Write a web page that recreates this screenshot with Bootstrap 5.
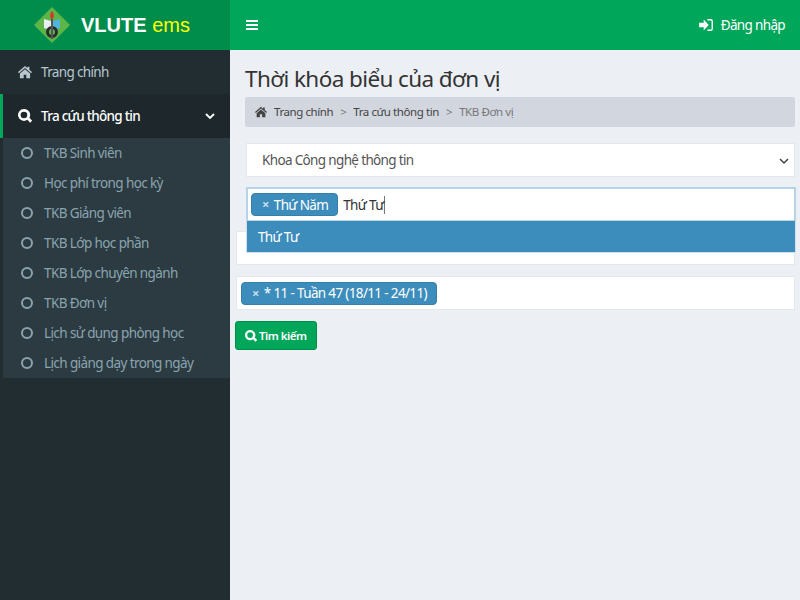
<!DOCTYPE html>
<html lang="en">

<head>
    <meta charset="UTF-8">
    <meta name="viewport" content="width=device-width, initial-scale=1.0">
    <title>Thời khóa biểu của đơn vị</title>
    <link href="https://cdn.jsdelivr.net/npm/bootstrap@5.3.0/dist/css/bootstrap.min.css" rel="stylesheet">
    <style>
        html, body { height: 100%; }
        body {
            font-family: "Noto Sans", "Open Sans", sans-serif;
            font-size: 13.5px;
            letter-spacing: -.65px;
            background: #ecf0f5;
            color: #333;
            overflow: hidden;
        }

        .app-shell { width: 800px; height: 600px; }

        /* sidebar */
        .side-col { width: 230px; background: #222d32; flex: none; }
        .brand-bar {
            height: 50px;
            background: #008d4c;
            gap: 11px;
            padding-left: 34px;
            font-family: "Liberation Sans", Arial, sans-serif;
            font-size: 20px;
            letter-spacing: 0;
        }
        .brand-bar b { color: #fff; }
        .brand-bar span { color: #ff0; font-size: 20px; }
        .side-link {
            height: 44px;
            padding-left: 18px;
            padding-right: 15px;
            color: #b8c7ce;
            gap: 9px;
        }
        .side-link svg { width: 14px; height: 14px; fill: currentColor; flex: none; }
        .side-link.is-open {
            background: #1e282c;
            color: #fff;
            border-left: 3px solid #00a65a;
            padding-left: 15px;
            letter-spacing: -.72px;
        }
        .side-sub { background: #2c3b41; margin-left: 3px; height: 240px; }
        .sub-link {
            height: 30px;
            padding-left: 18px;
            color: #8aa4af;
            gap: 11px;
            letter-spacing: -.6px;
        }
        .sub-dot {
            width: 12px;
            height: 12px;
            border: 2px solid #8aa4af;
            border-radius: 50%;
            flex: none;
        }

        /* top bar */
        .top-bar {
            height: 50px;
            background: #00a65a;
            color: #fff;
            padding: 0 15px;
        }
        .top-bar svg { fill: #fff; }

        /* content */
        .page-title {
            font-size: 22.5px;
            font-weight: 400;
            line-height: 26px;
            margin: 16px 0 0 15px;
            letter-spacing: -.6px;
        }
        .crumb-bar {
            height: 30px;
            margin: 5px 5px 0 15px;
            padding-left: 10px;
            background: #d2d6de;
            border-radius: 2px;
            font-size: 11.5px;
            color: #444;
            gap: 7px;
            letter-spacing: -.42px;
        }
        .crumb-bar svg { width: 12px; height: 12px; fill: #444; margin-right: 0; }
        .crumb-sep, .crumb-now { color: #777; }
        .field-box {
            height: 34px;
            background: #fff;
            border: 1px solid #e4e8ee;
            margin-right: 5px;
            margin-left: 16px;
        }
        .field-pick {
            margin-top: 16px;
            padding-left: 15px;
            color: #555;
        }
        .field-pick svg { position: absolute; right: 5px; top: 14px; }
        .field-focus {
            margin-top: 10px;
            border-color: #b7d3e6;
            border-width: 2px 2px 1px;
            padding: 0 3px;
            margin-right: 4px;
            color: #333;
        }
        .field-wide { margin-left: 6px; }
        .field-after { margin-top: 10px; }
        .field-week { margin-top: 11px; padding-left: 4px; }
        .tag-pill {
            background: #3c8dbc;
            border: 1px solid #367fa9;
            border-radius: 4px;
            color: #fff;
            height: 23px;
            padding: 1px 9px 0 10px;
            gap: 5px;
        }
        .tag-pill i { font-style: normal; color: #c6dcea; font-size: 13px; font-weight: 700; }
        .type-caret { border-right: 1px solid #777; line-height: 18px; margin-left: 5px; }
        .pick-menu {
            position: absolute;
            left: -2px;
            right: -2px;
            top: 32px;
            height: 32px;
            padding: 1px 0 0 11px;
            background: #3c8dbc;
            border: 1px solid #d0e0ec;
            border-top: 0;
            color: #fff;
            z-index: 5;
        }
        .btn-find {
            margin: 11px 0 0 5px;
            height: 29px;
            padding: 0 9px;
            font-size: 11.5px;
            background: #00a65a;
            border: 1px solid #008d4c;
            border-radius: 3px;
            color: #fff;
            font-weight: 600;
            letter-spacing: -.5px;
            gap: 2px;
            white-space: nowrap;
        }
    </style>
</head>

<body>
    <div class="app-shell d-flex">
        <aside class="side-col d-flex flex-column">
            <div class="brand-bar d-flex align-items-center">
                <svg width="36" height="36" viewBox="0 0 36 36">
                    <polygon points="18,0 36,18 18,36 0,18" fill="#5cb547"/>
                    <path d="M10 12l7 2v9l-7-2z" fill="#e8eef2"/>
                    <path d="M26 12l-7 2v9l7-2z" fill="#4db5e0"/>
                    <path d="M18 4c-2.500 3-2.500 6 0 9 2.500-3 2.500-6 0-9z" fill="#d8352a"/>
                    <circle cx="18" cy="25" r="4.500" fill="none" stroke="#2a2a2a" stroke-width="3"/>
                    <rect x="17" y="12" width="2" height="20" fill="#555"/>
                </svg>
                <div><b>VLUTE</b> <span>ems</span></div>
            </div>
            <a class="side-link d-flex align-items-center text-decoration-none" href="#">
                <svg viewBox="0 0 16 16"><path d="M8 1 0 8l1 1.300 7-6 7 6L16 8l-3-2.600V2h-2.200v1.500zM2.200 9.800V15h4.300v-4h3v4h4.300V9.800L8 4.800z"/></svg>
                <span>Trang chính</span>
            </a>
            <a class="side-link is-open d-flex align-items-center text-decoration-none fw-medium" href="#">
                <svg viewBox="0 0 16 16"><path d="M6.800 0a6.800 6.800 0 1 0 3.900 12.400l3.200 3.200 2.300-2.300-3.200-3.200A6.800 6.800 0 0 0 6.800 0zm0 3a3.800 3.800 0 1 1 0 7.600 3.800 3.800 0 0 1 0-7.600z"/></svg>
                <span class="flex-grow-1">Tra cứu thông tin</span>
                <svg style="width:10px;height:10px" viewBox="0 0 10 10"><path d="M1 3l4 4 4-4" fill="none" stroke="#fff" stroke-width="1.800"/></svg>
            </a>
            <div class="side-sub">
                <a class="sub-link d-flex align-items-center text-decoration-none" href="#"><span class="sub-dot"></span>TKB Sinh viên</a>
                <a class="sub-link d-flex align-items-center text-decoration-none" href="#"><span class="sub-dot"></span>Học phí trong học kỳ</a>
                <a class="sub-link d-flex align-items-center text-decoration-none" href="#"><span class="sub-dot"></span>TKB Giảng viên</a>
                <a class="sub-link d-flex align-items-center text-decoration-none" href="#"><span class="sub-dot"></span>TKB Lớp học phần</a>
                <a class="sub-link d-flex align-items-center text-decoration-none" href="#"><span class="sub-dot"></span>TKB Lớp chuyên ngành</a>
                <a class="sub-link d-flex align-items-center text-decoration-none" href="#"><span class="sub-dot"></span>TKB Đơn vị</a>
                <a class="sub-link d-flex align-items-center text-decoration-none" href="#"><span class="sub-dot"></span>Lịch sử dụng phòng học</a>
                <a class="sub-link d-flex align-items-center text-decoration-none" href="#"><span class="sub-dot"></span>Lịch giảng dạy trong ngày</a>
            </div>
        </aside>

        <main class="flex-grow-1">
            <div class="top-bar d-flex align-items-center justify-content-between">
                <svg width="14" height="12" viewBox="0 0 14 12"><path d="M1 1h12v2H1zM1 5h12v2H1zM1 9h12v2H1z"/></svg>
                <div class="d-flex align-items-center gap-1">
                    <svg width="14" height="12" viewBox="0 0 15 13"><path d="M0 4h5V.5l5.500 6-5.500 6V9H0zM9 0h3.500A2.500 2.500 0 0 1 15 2.500v8a2.500 2.500 0 0 1-2.500 2.500H9v-1.500h3.500a1 1 0 0 0 1-1v-8a1 1 0 0 0-1-1H9z"/></svg>
                    <span class="ms-1">Đăng nhập</span>
                </div>
            </div>

            <h1 class="page-title">Thời khóa biểu của đơn vị</h1>
            <div class="crumb-bar d-flex align-items-center">
                <svg viewBox="0 0 16 16"><path d="M8 1 0 8l1 1.300 7-6 7 6L16 8l-3-2.600V2h-2.200v1.500zM2.200 9.800V15h4.300v-4h3v4h4.300V9.800L8 4.800z"/></svg>
                <span>Trang chính</span><span class="crumb-sep">&gt;</span>
                <span>Tra cứu thông tin</span><span class="crumb-sep">&gt;</span>
                <span class="crumb-now">TKB Đơn vị</span>
            </div>

            <div class="field-box field-pick position-relative d-flex align-items-center">
                Khoa Công nghệ thông tin
                <svg width="10" height="7" viewBox="0 0 10 7"><path d="M1 1l4 4 4-4" fill="none" stroke="#444" stroke-width="1.500"/></svg>
            </div>

            <div class="field-box field-focus position-relative d-flex align-items-center">
                <span class="tag-pill d-flex align-items-center"><i>×</i>Thứ Năm</span>
                <span class="type-caret">Thứ Tư</span>
                <div class="pick-menu d-flex align-items-center">Thứ Tư</div>
            </div>

            <div class="field-box field-wide field-after"></div>

            <div class="field-box field-wide field-week d-flex align-items-center">
                <span class="tag-pill d-flex align-items-center"><i>×</i>* 11 - Tuần 47 (18/11 - 24/11)</span>
            </div>

            <button class="btn-find d-flex align-items-center" type="button">
                <svg width="12" height="12" viewBox="0 0 16 16" fill="#fff"><path d="M6.800 0a6.800 6.800 0 1 0 3.900 12.400l3.200 3.200 2.300-2.300-3.200-3.200A6.800 6.800 0 0 0 6.800 0zm0 3a3.800 3.800 0 1 1 0 7.600 3.800 3.800 0 0 1 0-7.600z"/></svg>
                Tìm kiếm
            </button>
        </main>
    </div>

    <script src="https://cdn.jsdelivr.net/npm/bootstrap@5.3.0/dist/js/bootstrap.bundle.min.js"></script>
</body>

</html>
